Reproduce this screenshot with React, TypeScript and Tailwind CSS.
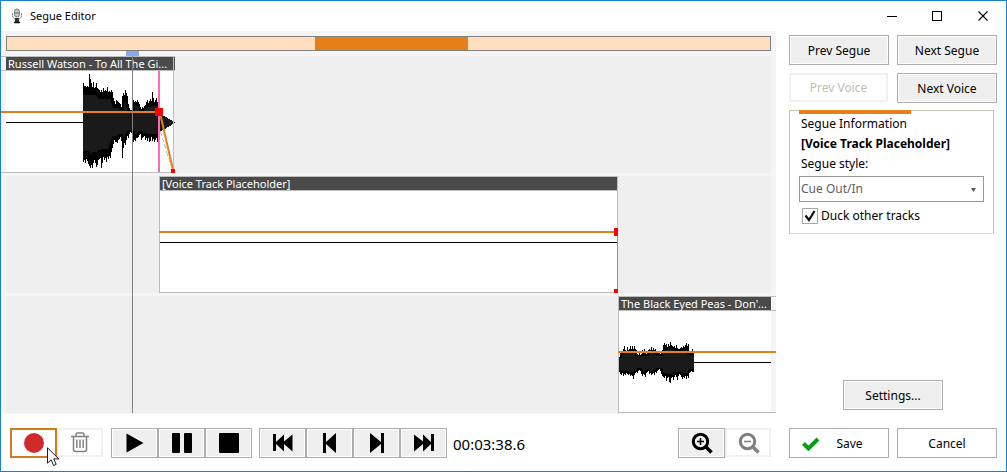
import React, { useState } from 'react';

interface Wave {
  start: number;
  top: number[];
  bottom: number[];
}

interface ClipProps {
  title: string;
  left: number;
  width: number;
  titleInset?: string;
  children: React.ReactNode;
}

// One value per pixel column, distance from the centre line
const russellWave: Wave = {
  start: 82,
  top: [
    39, 36, 36, 35, 36, 35, 48, 43, 39, 35, 40, 34, 35, 39, 34, 33, 32, 30, 32, 30, 34, 31, 32, 31, 35, 30, 31, 30, 32,
    30, 24, 21, 18, 22, 21, 20, 19, 18, 15, 26, 29, 27, 32, 29, 26, 18, 14, 12, 12, 14, 22, 20, 21, 20, 22, 20, 18, 15,
    13, 15, 14, 16, 17, 20, 22, 19, 21, 23, 21, 30, 24, 20, 22, 24, 20,
  ],
  bottom: [
    40, 38, 41, 37, 39, 42, 44, 46, 43, 46, 41, 38, 41, 45, 43, 38, 37, 36, 46, 41, 35, 38, 36, 40, 35, 37, 34, 36, 30,
    26, 22, 18, 20, 20, 21, 18, 17, 15, 19, 36, 26, 21, 23, 18, 14, 16, 12, 10, 11, 12, 20, 18, 19, 16, 16, 15, 13, 12,
    18, 16, 15, 14, 18, 16, 19, 16, 20, 19, 15, 19, 17, 20, 18, 16, 20,
  ],
};

const peasWave: Wave = {
  start: 1,
  top: [
    5, 10, 9, 11, 13, 16, 12, 11, 15, 12, 13, 16, 13, 16, 13, 16, 13, 12, 8, 7, 9, 7, 8, 12, 11, 13, 10, 8, 9, 12, 13,
    12, 15, 12, 14, 12, 13, 10, 11, 9, 9, 8, 11, 12, 17, 19, 17, 18, 15, 18, 16, 20, 17, 16, 15, 16, 14, 17, 14, 13, 13,
    14, 15, 14, 16, 15, 17, 19, 16, 18, 10, 10, 9, 13, 10,
  ],
  bottom: [
    10, 12, 13, 11, 14, 12, 13, 11, 12, 13, 12, 14, 13, 14, 17, 13, 11, 10, 11, 9, 8, 9, 12, 14, 12, 13, 15, 11, 10, 9,
    12, 11, 13, 12, 11, 13, 10, 11, 9, 8, 7, 9, 12, 14, 15, 16, 14, 19, 16, 15, 20, 21, 16, 15, 18, 15, 13, 15, 18, 14,
    12, 13, 15, 17, 15, 16, 14, 17, 14, 16, 11, 10, 9, 10, 10,
  ],
};

const Waveform: React.FC<{ wave: Wave; inset: number }> = ({ wave, inset }) => {
  const column = (i: number, up: number, down: number) => `M${wave.start + i} ${51 - up}h1v${up + down}h-1z`;
  const smooth = (list: number[], i: number) => {
    const part = list.slice(Math.max(0, i - 2), i + 3);
    return Math.max(4, Math.round(Math.min(...part) * inset));
  };
  return (
    <>
      <path d={wave.top.map((v, i) => column(i, v, wave.bottom[i])).join('')} fill="#000" />
      <path
        d={wave.top.map((_, i) => column(i, smooth(wave.top, i), smooth(wave.bottom, i))).join('')}
        fill="#1a1a1a"
      />
    </>
  );
};

const Clip: React.FC<ClipProps> = ({ title, left, width, titleInset = '', children }) => (
  <div className="absolute top-0 h-[117px] border-y border-[#bdbdbd]" style={{ left, width }}>
    <div className={`border-b border-[#bdbdbd] ${titleInset}`}>
      <div className="h-[13px] bg-[#4a4a4a] pl-[2px] text-[11px] leading-[13px] whitespace-nowrap text-white">
        {title}
      </div>
    </div>
    <svg
      width={width}
      height={101}
      viewBox={`0 0 ${width} 101`}
      shapeRendering="crispEdges"
      className="block overflow-visible"
    >
      {children}
    </svg>
  </div>
);

const Lane: React.FC<{ children: React.ReactNode }> = ({ children }) => (
  <div className="relative mx-[5px] h-[117px] bg-[#efefef]">{children}</div>
);

type ButtonProps = React.ButtonHTMLAttributes<HTMLButtonElement>;

const PushButton: React.FC<ButtonProps & { plain?: boolean }> = ({ plain, children, ...rest }) => (
  <button
    type="button"
    className={`flex h-[30px] w-[100px] items-center justify-center border border-[#adadad] pt-px text-[12px] text-black disabled:h-[29px] disabled:w-[99px] disabled:border-2 disabled:border-[#f0f0f0] disabled:bg-white disabled:text-[#c4bcb4] ${
      plain ? 'bg-white' : 'bg-[#efefef] ring-1 ring-white ring-inset disabled:ring-0'
    }`}
    {...rest}
  >
    {children}
  </button>
);

const ToolButton: React.FC<ButtonProps> = ({ children, ...rest }) => (
  <button
    type="button"
    className="flex h-[30px] w-[47px] items-center justify-center border border-[#adadad] bg-[#efefef] ring-1 ring-white ring-inset disabled:h-[29px] disabled:w-[46px] disabled:border-2 disabled:border-[#f0f0f0] disabled:bg-white disabled:ring-0"
    {...rest}
  >
    <svg width="24" height="24" viewBox="0 0 24 24">
      {children}
    </svg>
  </button>
);

const TitleBar: React.FC = () => (
  <header className="flex h-[30px] items-center pl-[9px]">
    <svg width="14" height="16" viewBox="0 0 14 16">
      <rect x="4.5" y="1" width="5" height="8" rx="2.5" fill="#c9c9c9" stroke="#777" />
      <path d="M5 5h4" stroke="#666" />
      <path d="M2.5 5v2.5a4.5 4 0 0 0 9 0V5" fill="none" stroke="#8a8a8a" />
      <path d="M5 10h4v4H5z" fill="#333" />
      <path d="M4 14.5h6" stroke="#111" strokeWidth="1.5" />
    </svg>
    <h1 className="ml-[6px] flex-1 text-[11px]">Segue Editor</h1>
    <button type="button" aria-label="Minimize" className="flex h-[29px] w-[46px] items-center justify-center">
      <svg width="11" height="11" shapeRendering="crispEdges">
        <path d="M0 5.5h10" stroke="#000" />
      </svg>
    </button>
    <button type="button" aria-label="Maximize" className="flex h-[29px] w-[45px] items-center justify-center">
      <svg width="11" height="11" shapeRendering="crispEdges">
        <path d="M.5.5h9v9h-9z" fill="none" stroke="#000" />
      </svg>
    </button>
    <button type="button" aria-label="Close" className="flex h-[29px] w-[46px] items-center justify-center">
      <svg width="11" height="11">
        <path d="M.5.5l9 9M9.500.5l-9 9" stroke="#000" strokeWidth="1.1" />
      </svg>
    </button>
  </header>
);

const Timeline: React.FC = () => (
  <section aria-label="Timeline" className="overflow-hidden bg-[#f5f5f5] pt-[5px]">
    <div className="mx-[5px] h-[15px] border border-[#808080] bg-[#ffdfc0]">
      <div className="h-full bg-[#e58019]" style={{ marginLeft: '40.4%', width: '20%' }} />
    </div>
    <div className="relative flex flex-col gap-[3px] pt-[5px] pb-px">
      <Lane>
        <Clip title="Russell Watson - To All The Gi..." left={-5} width={174} titleInset="pl-[5px]">
          <rect x="5" width="168" height="101" fill="#fff" />
          <path d="M5 51.5h77" stroke="#000" />
          <Waveform wave={russellWave} inset={0.78} />
          <path d="M159 43l15 8v1l-15 9z" fill="#1a1a1a" />
          <path d="M172.5 -14V101" stroke="#bdbdbd" />
          <path d="M159 60L172 100" stroke="#c4c4c4" strokeDasharray="5 2" />
          <path d="M158 0V101" stroke="#ff69b4" strokeWidth="2" />
          <path d="M0 41H158" stroke="#e58019" strokeWidth="2" />
          <path d="M159 42L172 99" stroke="#e58019" strokeWidth="2" shapeRendering="auto" />
          <path d="M154 37h8v8h-8zM170 98h4v4h-4z" fill="#f00" />
        </Clip>
      </Lane>
      <Lane>
        <Clip title="[Voice Track Placeholder]" left={153} width={459} titleInset="px-px">
          <rect width="459" height="101" fill="#fff" />
          <path d="M.5 -14V101M458.5 -14V40" stroke="#bdbdbd" />
          <path d="M1 51.5H458" stroke="#000" />
          <path d="M0 41H458" stroke="#e58019" strokeWidth="2" />
          <path d="M458.5 44V98" stroke="#e58019" />
          <path d="M455 37h4v8h-4zM455 98h4v4h-4z" fill="#f00" />
        </Clip>
      </Lane>
      <Lane>
        <Clip title="The Black Eyed Peas - Don'..." left={612} width={158} titleInset="pl-px pr-[5px]">
          <rect width="153" height="101" fill="#fff" />
          <path d="M.5 -14V101" stroke="#bdbdbd" />
          <path d="M76 51.5h77" stroke="#000" />
          <Waveform wave={peasWave} inset={0.8} />
          <path d="M0 41H158" stroke="#e58019" strokeWidth="2" />
        </Clip>
      </Lane>
      <div className="absolute top-0 bottom-px left-[131px] w-px bg-[#7f7f7f]" />
      <div className="absolute top-0 left-[125px] h-[5px] w-[13px] bg-[#87aaee]" />
    </div>
  </section>
);

const Transport: React.FC = () => (
  <div className="mt-[14px] flex h-[30px] items-start pr-[5px] pl-[9px]">
    <div className="relative">
      <button
        type="button"
        aria-label="Record"
        className="flex h-[30px] w-[47px] items-center justify-center border-2 border-[#d37a1a] bg-white"
      >
        <svg width="20" height="20">
          <circle cx="10" cy="10" r="10" fill="#d12a2a" />
        </svg>
      </button>
      <svg width="13" height="20" viewBox="0 0 13 20" className="pointer-events-none absolute top-[19px] left-[37px]">
        <path
          d="M.5.8v15.4l3.6-3.4 2.5 5.7 2.6-1.1-2.5-5.5h5.1z"
          fill="#fff"
          stroke="#1a1a2a"
          strokeLinejoin="round"
        />
      </svg>
    </div>
    <ToolButton aria-label="Delete" disabled>
      <g fill="none" stroke="#808080" strokeWidth="1.5">
        <path d="M3 5.5h18M8 5.500V3.500q0-1.500 1.500-1.500h5q1.500 0 1.500 1.500v2M5.500 5.500V18.500q0 2 2 2h9q2 0 2-2V5.500" />
        <path d="M8.800 8.500v8.500M12 8.500v8.500M15.200 8.500v8.500" />
      </g>
    </ToolButton>
    <div className="ml-[8px] flex">
      <ToolButton aria-label="Play">
        <path d="M3.500 2.500v19L20.500 12z" />
      </ToolButton>
      <ToolButton aria-label="Pause">
        <rect x="2" y="2" width="8" height="20" rx="1" />
        <rect x="14" y="2" width="8" height="20" rx="1" />
      </ToolButton>
      <ToolButton aria-label="Stop">
        <rect x="2" y="2" width="20" height="20" rx="1" />
      </ToolButton>
    </div>
    <div className="ml-[7px] flex">
      <ToolButton aria-label="First">
        <path d="M2 3h3v8l8-7.5v7L21.500 3.500v17L13 13v7.500L5 13v7H2z" />
      </ToolButton>
      <ToolButton aria-label="Previous">
        <path d="M5 2h3v9l10-9v20L8 13v9H5z" />
      </ToolButton>
      <ToolButton aria-label="Next">
        <path d="M19 2h-3v9L5 2v20l11-9v9h3z" />
      </ToolButton>
      <ToolButton aria-label="Last">
        <path d="M22 3h-3v8l-8-7.500v7L2 3.500v17L11 13v7.500l8-7.500v7h3z" />
      </ToolButton>
    </div>
    <output className="ml-[6px] self-center pt-[2px] text-[15px] leading-5">00:03:38.6</output>
    <div className="ml-auto flex">
      <ToolButton aria-label="Zoom in">
        <g fill="none" stroke="#000">
          <circle cx="10.500" cy="10.500" r="7.200" strokeWidth="3" />
          <path d="M15.500 15.500l6 6" strokeWidth="3.500" />
          <path d="M10.500 7v7M7 10.500h7" strokeWidth="1.500" />
        </g>
      </ToolButton>
      <ToolButton aria-label="Zoom out" disabled>
        <g fill="none" stroke="#808080">
          <circle cx="11.500" cy="10.500" r="7.200" strokeWidth="3" />
          <path d="M16.500 15.500l6 6" strokeWidth="3.500" />
          <path d="M8 10.500h7" strokeWidth="1.500" />
        </g>
      </ToolButton>
    </div>
  </div>
);

const SegueInfo: React.FC = () => {
  const [duck, setDuck] = useState(true);
  return (
    <section className="mt-[7px] mr-[3px] border border-[#c3c3b4] border-b-[#dcdcd4] pr-[9px] pb-[9px] pl-[9px] text-[12px] leading-5">
      <div className="-mt-px h-[4px] w-[112px] bg-[#e58019]" />
      <h2 className="pl-[2px]">Segue Information</h2>
      <p className="pl-[2px] font-bold">[Voice Track Placeholder]</p>
      <label htmlFor="segue-style" className="block pl-[2px]">
        Segue style:
      </label>
      <div className="relative mt-[2px]">
        <select
          id="segue-style"
          className="block h-[26px] w-full appearance-none border border-[#999] bg-white pl-[1px] text-[12px] text-[#606060]"
        >
          <option>Cue Out/In</option>
        </select>
        <svg width="5" height="4" className="pointer-events-none absolute top-[12px] right-[8px]">
          <path d="M0 0h5L2.500 4z" fill="#555" />
        </svg>
      </div>
      <label className="mt-[6px] flex h-4 items-center pl-[3px]">
        <span className="relative mr-[3px] h-4 w-4">
          <input
            type="checkbox"
            checked={duck}
            onChange={(e) => setDuck(e.target.checked)}
            className="block h-4 w-4 appearance-none border border-[#a8a8a8] bg-white"
          />
          {duck && (
            <svg width="16" height="16" className="pointer-events-none absolute inset-0">
              <path d="M3.500 7.500l3.500 4.500 5.500-9" fill="none" stroke="#111" strokeWidth="2.200" />
            </svg>
          )}
        </span>
        Duck other tracks
      </label>
    </section>
  );
};

export default function App() {
  return (
    <div className="flex min-h-screen flex-col border border-[#1a7fd0] bg-white font-['Noto_Sans','Open_Sans',sans-serif] text-black">
      <TitleBar />
      <main className="flex flex-1 pb-[13px]">
        <div className="min-w-0 flex-1">
          <Timeline />
          <Transport />
        </div>
        <aside className="mr-[9px] ml-[13px] flex w-[208px] shrink-0 flex-col pt-[4px]">
          <div className="grid grid-cols-2 gap-[8px]">
            <PushButton>Prev Segue</PushButton>
            <PushButton>Next Segue</PushButton>
            <PushButton disabled>Prev Voice</PushButton>
            <PushButton>Next Voice</PushButton>
          </div>
          <SegueInfo />
          <div className="mt-auto flex justify-center">
            <PushButton>Settings...</PushButton>
          </div>
          <div className="mt-[18px] flex gap-[8px]">
            <PushButton plain>
              <span className="flex items-center pr-[14px]">
                <svg width="20" height="18" viewBox="0 0 20 18" className="mr-[15px]">
                  <path d="M2.500 8.500l5 5L17 4" fill="none" stroke="#0a9a14" strokeWidth="4" />
                </svg>
                Save
              </span>
            </PushButton>
            <PushButton plain>Cancel</PushButton>
          </div>
        </aside>
      </main>
    </div>
  );
}
